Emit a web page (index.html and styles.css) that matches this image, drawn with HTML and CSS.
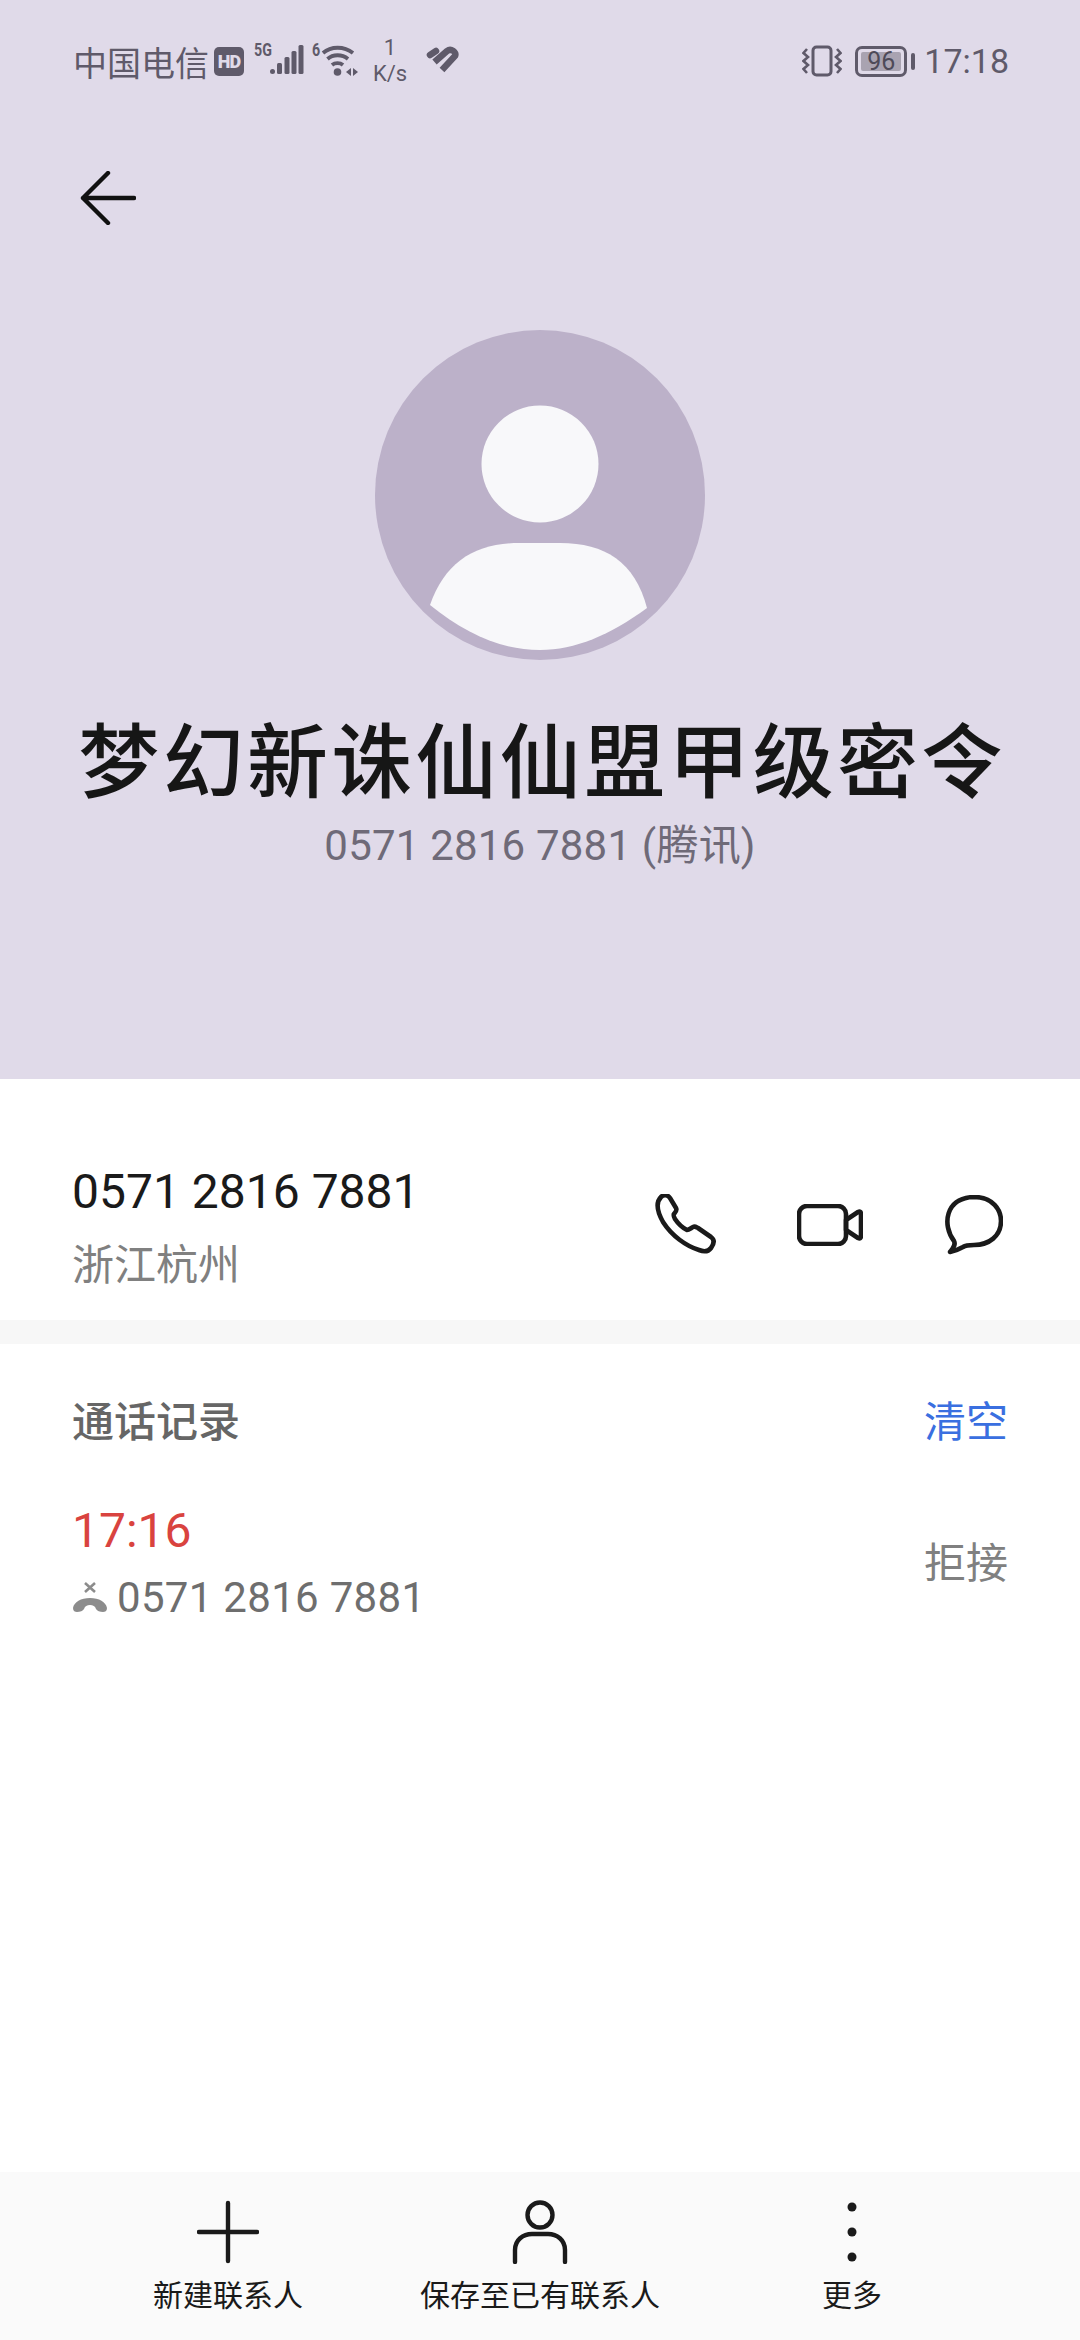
FILE: index.html
```html
<!DOCTYPE html>
<html>
<head>
  <meta charset="utf-8">
  <meta name="viewport" content="width=device-width, initial-scale=1.0">
  <link rel="stylesheet" href="styles.css">
</head>
<body>
  <div class="page">

    <!-- 顶部紫色区域 -->
    <header class="hero">
      <div class="status">
        <div class="status-left">
          <span class="carrier">中国电信</span>
          <span class="hd">HD</span>
          <span class="net">
            <span class="net-tag">5G</span>
            <svg width="34" height="34" viewBox="0 0 34 34"><g fill="#5f5a6a"><rect x="0" y="24" width="5" height="5" rx="2.500"/><rect x="7" y="18" width="5" height="11" rx="1.500"/><rect x="14.500" y="12" width="5" height="17" rx="1.500"/><rect x="21.500" y="6" width="5" height="23" rx="1.500"/><rect x="28.500" y="0" width="5" height="29" rx="1.500"/></g></svg>
          </span>
          <span class="net wifi">
            <span class="net-tag">6</span>
            <svg width="38" height="34" viewBox="0 0 38 34"><g fill="none" stroke="#5f5a6a" stroke-width="3.800"><path d="M3 8C11 1 24 1 33 8"/><path d="M7.500 14C13 9 22 9 28 14"/><path d="M12 20C15 17.500 20 17.500 23 20"/></g><circle cx="17.500" cy="27" r="3.800" fill="#5f5a6a"/><path d="M26 27l5-4v8zM38 27l-5-4v8z" fill="#5f5a6a"/></svg>
          </span>
          <span class="speed"><span>1</span><span>K/s</span></span>
          <svg class="heart" width="34" height="30" viewBox="0 0 34 30"><g fill="none" stroke="#5f5a6a" stroke-width="6.500"><path d="M5 9L11 5" stroke-linecap="round"/><path d="M9.500 16L22 5C26 2 32 6 30 10L17 24"/></g></svg>
        </div>
        <div class="status-right">
          <svg width="40" height="32" viewBox="0 0 40 32"><rect x="11" y="2" width="18" height="28" rx="3.500" fill="none" stroke="#5f5a6a" stroke-width="3"/><g fill="none" stroke="#5f5a6a" stroke-width="2.600"><path d="M5 4L1.500 8L6 12L1.500 16L6 20L1.500 24L5 28"/><path d="M35 4L38.500 8L34 12L38.500 16L34 20L38.500 24L35 28"/></g></svg>
          <span class="battery"><span class="battery-level">96</span></span>
          <span class="battery-tip"></span>
          <span class="clock">17:18</span>
        </div>
      </div>

      <svg class="back" width="56" height="54" viewBox="0 0 56 54"><path d="M54 27H3M28 2L3 27L28 52" fill="none" stroke="#111" stroke-width="4.400" stroke-linecap="round" stroke-linejoin="round"/></svg>

      <svg class="avatar" width="330" height="330" viewBox="0 0 330 330">
        <circle cx="165" cy="165" r="165" fill="#bcb1c9"/>
        <circle cx="165" cy="134" r="58.500" fill="#f8f8fa"/>
        <path d="M55 275C70 232 100 213 145 213H185C230 213 260 232 272 278C235 305 200 320 165 320C125 320 90 303 55 275Z" fill="#f8f8fa"/>
      </svg>

      <h1 class="name">梦幻新诛仙仙盟甲级密令</h1>
      <div class="name-sub">0571 2816 7881 (腾讯)</div>
    </header>

    <!-- 号码 -->
    <section class="number-row">
      <div>
        <div class="number">0571 2816 7881</div>
        <div class="place">浙江杭州</div>
      </div>
      <div class="actions">
        <svg width="62" height="62" viewBox="0 0 62 62"><path d="M6 3C9 0 13 1 15 4L21 14C22 16 21 18 19 20C18 21 19 23 20 25C24 31 28 34 32 36C34 36 36 34 38 33C40 32 41 33 43 34L56 43C60 46 59 50 56 54C53 58 49 58 44 56C31 52 17 42 8 28C3 19 0 9 6 3Z" fill="none" stroke="#1a1a1a" stroke-width="4.600" stroke-linejoin="round"/></svg>
        <svg width="66" height="42" viewBox="0 0 66 42"><rect x="2" y="2" width="47" height="38" rx="8" fill="none" stroke="#1a1a1a" stroke-width="4.600"/><path d="M49 16L61 8C63 7 64 8 64 10V32C64 34 63 35 61 34L49 26Z" fill="none" stroke="#1a1a1a" stroke-width="4.600" stroke-linejoin="round"/></svg>
        <svg width="60" height="60" viewBox="0 0 60 60"><path d="M11 46C-1 30 2 3 31 2C50 2 58 15 58 26C58 41 46 50 31 50C27 50 23 50 20 52C15 55 11 56 7 57C10 53 13 50 11 46Z" fill="none" stroke="#1a1a1a" stroke-width="4.600" stroke-linejoin="round"/></svg>
      </div>
    </section>

    <div class="band"></div>

    <!-- 通话记录 -->
    <section class="log">
      <div class="log-head">
        <span class="log-title">通话记录</span>
        <span class="log-clear">清空</span>
      </div>
      <div class="log-item">
        <div>
          <div class="log-time">17:16</div>
          <div class="log-line">
            <svg width="36" height="34" viewBox="0 0 36 34"><path d="M13 2L23 11M23 2L13 11" stroke="#8c8c8c" stroke-width="2.600" fill="none"/><path d="M1 27C2 21 9 17 18 17C27 17 34 21 35 27C35 30 33 31 31 31C28 31 25 30 24 28C23 25 21 24 18 24C15 24 13 25 12 28C11 30 8 31 5 31C3 31 1 30 1 27Z" fill="#8c8c8c"/></svg>
            <span>0571 2816 7881</span>
          </div>
        </div>
        <span class="log-state">拒接</span>
      </div>
    </section>

    <!-- 底部操作 -->
    <nav class="bottom">
      <div class="bottom-item">
        <svg width="62" height="62" viewBox="0 0 62 62"><path d="M31 2V60M2 31H60" stroke="#1a1a1a" stroke-width="4.400" stroke-linecap="round" fill="none"/></svg>
        <span>新建联系人</span>
      </div>
      <div class="bottom-item">
        <svg width="56" height="64" viewBox="0 0 56 64"><circle cx="28" cy="15" r="12.500" fill="none" stroke="#1a1a1a" stroke-width="4.400"/><path d="M3 62V50C3 40 11 34 20 34H36C45 34 53 40 53 50V62" fill="none" stroke="#1a1a1a" stroke-width="4.400" stroke-linecap="round"/></svg>
        <span>保存至已有联系人</span>
      </div>
      <div class="bottom-item">
        <svg width="12" height="62" viewBox="0 0 12 62"><circle cx="6" cy="6" r="4.500" fill="#1a1a1a"/><circle cx="6" cy="31" r="4.500" fill="#1a1a1a"/><circle cx="6" cy="56" r="4.500" fill="#1a1a1a"/></svg>
        <span>更多</span>
      </div>
    </nav>

  </div>
</body>
</html>
```

FILE: styles.css
```css
* {
  box-sizing: border-box;
}

html, body {
  margin: 0;
  padding: 0;
  background: #fff;
  font-family: Roboto, "Noto Sans CJK SC", sans-serif;
}

svg {
  display: block;
  flex: none;
}

.page {
  width: 1080px;
  height: 2340px;
  display: flex;
  flex-direction: column;
  overflow: hidden;
}

/* 顶部 */
.hero {
  height: 1079px;
  background: #e0dae9;
  display: flex;
  flex-direction: column;
  align-items: center;
  flex: none;
}

.status {
  width: 100%;
  height: 122px;
  padding: 0 71px 0 73px;
  display: flex;
  justify-content: space-between;
  align-items: center;
  color: #5f5a6a;
}

.status-left, .status-right {
  display: flex;
  align-items: center;
}

.carrier {
  font-size: 34px;
}

.hd {
  margin-left: 5px;
  width: 30px;
  height: 29px;
  border-radius: 5px;
  background: #5f5a6a;
  color: #e0dae9;
  font-size: 18px;
  font-weight: 900;
  text-align: center;
  line-height: 29px;
  letter-spacing: -1px;
}

.net {
  display: flex;
  align-items: flex-end;
  margin-left: 10px;
  position: relative;
  width: 50px;
  justify-content: flex-end;
  height: 36px;
}

.net-tag {
  position: absolute;
  left: 0;
  top: -2px;
  font-size: 19px;
  font-weight: 700;
  line-height: 18px;
  transform: scaleX(0.75);
  transform-origin: left center;
}

.wifi {
  margin-left: 8px;
  width: 46px;
}

.speed {
  margin-left: 14px;
  width: 36px;
  display: flex;
  flex-direction: column;
  align-items: center;
  font-size: 22px;
  line-height: 26px;
}

.heart {
  margin-left: 17px;
}

.battery {
  margin-left: 13px;
  width: 52px;
  height: 31px;
  border: 3px solid #5f5a6a;
  border-radius: 7px;
  padding: 3px;
  display: flex;
}

.battery-level {
  flex: 1;
  background: #a9a3b1;
  border-radius: 2px;
  font-size: 25px;
  line-height: 19px;
  text-align: center;
  color: #4e4a58;
}

.battery-tip {
  margin-left: 4px;
  width: 4px;
  height: 17px;
  border-radius: 2px;
  background: #5f5a6a;
}

.clock {
  margin-left: 9px;
  font-size: 34px;
}

.back {
  align-self: flex-start;
  margin: 49px 0 0 80px;
}

.avatar {
  margin-top: 105px;
}

.name {
  margin: 54px 0 0;
  padding-left: 4px;
  font-size: 81px;
  line-height: 100px;
  font-weight: 500;
  letter-spacing: 3.300px;
  color: #161616;
  white-space: nowrap;
}

.name-sub {
  margin-top: 4px;
  font-size: 42px;
  line-height: 56px;
  letter-spacing: 0.200px;
  color: #6f6a78;
}

/* 号码 */
.number-row {
  height: 241px;
  padding: 50px 77px 0 72px;
  display: flex;
  justify-content: space-between;
  align-items: center;
  flex: none;
}

.number {
  font-size: 48px;
  line-height: 72px;
  color: #1a1a1a;
}

.place {
  margin-top: 10px;
  font-size: 42px;
  line-height: 56px;
  color: #808080;
}

.actions {
  display: flex;
  align-items: center;
  gap: 80px;
}

.band {
  height: 24px;
  background: #f7f7f7;
  flex: none;
}

/* 通话记录 */
.log {
  flex: 1;
  padding: 51px 72px 0;
}

.log-head {
  display: flex;
  justify-content: space-between;
  align-items: center;
  font-size: 42px;
  line-height: 56px;
}

.log-title {
  color: #666;
  font-weight: 500;
}

.log-clear {
  color: #3a6fe0;
}

.log-item {
  margin-top: 48px;
  display: flex;
  justify-content: space-between;
  align-items: center;
}

.log-time {
  font-size: 48px;
  line-height: 64px;
  color: #d9433f;
}

.log-line {
  margin-top: 7px;
  display: flex;
  align-items: center;
  gap: 9px;
  font-size: 42px;
  line-height: 56px;
  letter-spacing: 0.300px;
  color: #6e6e6e;
}

.log-state {
  margin-bottom: 6px;
  font-size: 42px;
  color: #808080;
}

/* 底部 */
.bottom {
  height: 168px;
  background: #fafafa;
  padding: 28px 72px 0;
  display: grid;
  grid-template-columns: repeat(3, 312px);
  flex: none;
}

.bottom-item {
  display: flex;
  flex-direction: column;
  align-items: center;
  justify-content: flex-start;
  font-size: 30px;
  color: #1a1a1a;
  white-space: nowrap;
}

.bottom-item svg {
  height: 64px;
}

.bottom-item span {
  margin-top: 10px;
  line-height: 44px;
}
```
